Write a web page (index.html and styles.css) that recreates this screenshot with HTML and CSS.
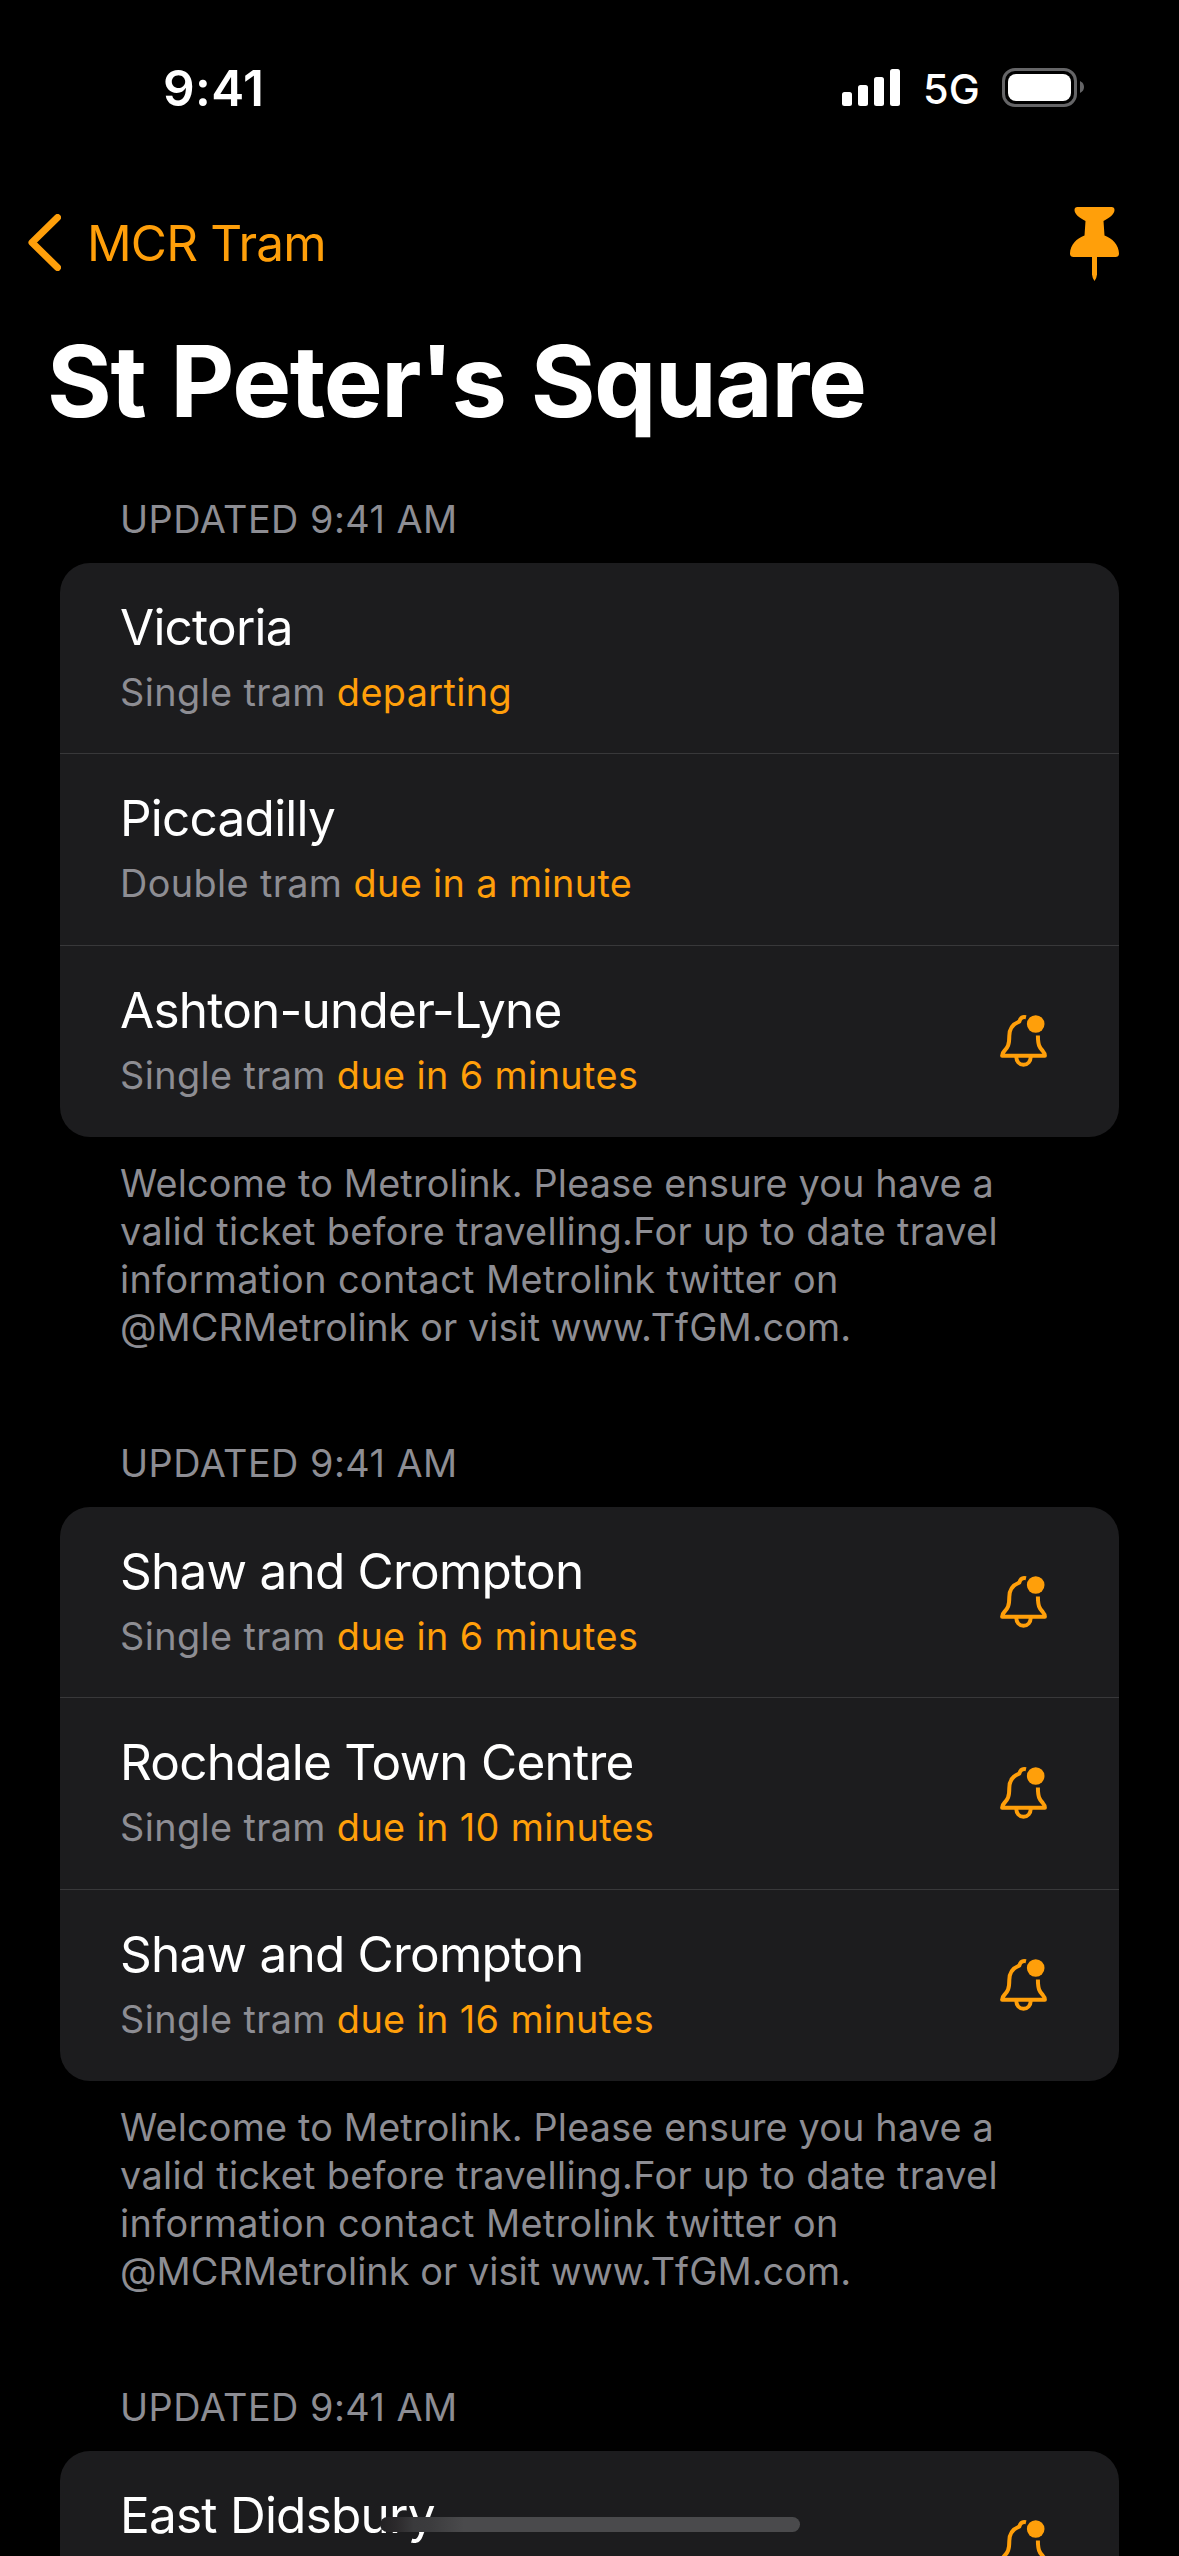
FILE: index.html
```html
<!DOCTYPE html>
<html lang="en">
<head>
<meta charset="utf-8">
<title>St Peter's Square</title>
<link rel="stylesheet" href="styles.css">
</head>
<body>
<svg class="defs" aria-hidden="true">
  <symbol id="bell" viewBox="0 0 47 52">
    <g fill="none" stroke="currentColor" stroke-width="4" stroke-linejoin="round">
      <path d="M26 2.300C22.500 1.500 20.300 3 19.300 6.600C12.800 9 9.300 13.500 9.300 21C9.300 30 7.700 32.500 4.300 36C2.700 37.600 2.100 39 2.100 40.700H44.900C44.900 39 44.300 37.600 42.800 36C39.300 32.500 38 30 37.900 20.500"/>
      <path d="M16.200 41.500C16.400 46.500 19.300 49.800 23.500 49.800S30.600 46.500 30.800 41.500"/>
    </g>
    <circle cx="35.700" cy="9" r="8.800" fill="currentColor"/>
  </symbol>
</svg>
<div class="screen">
  <header class="status">
    <span class="time">9:41</span>
    <div class="indicators">
      <svg class="signal" viewBox="0 0 58 37"><rect x="0" y="23" width="10" height="14" rx="2.500"/><rect x="16" y="16" width="10" height="21" rx="2.500"/><rect x="32" y="8" width="10" height="29" rx="2.500"/><rect x="48" y="0" width="10" height="37" rx="2.500"/></svg>
      <span class="network">5G</span>
      <svg class="battery" viewBox="0 0 82 39"><rect x="1.500" y="1.500" width="72" height="36" rx="11.500" fill="none" stroke="#656567" stroke-width="3"/><rect x="6" y="6" width="63" height="27" rx="8" fill="#fff"/><path d="M78 13C80.800 14.300 82 16.500 82 19S80.800 23.700 78 25Z" fill="#656567"/></svg>
    </div>
  </header>
  <nav class="nav">
    <a class="back"><svg class="chevron" viewBox="0 0 33 57"><path d="M29.500 3.500L4 28.500L29.500 53.500" fill="none" stroke="currentColor" stroke-width="7" stroke-linecap="round" stroke-linejoin="round"/></svg><span>MCR Tram</span></a>
    <svg class="pin" viewBox="0 0 49 74"><path d="M7.500 0H41.500Q44.500 0 44.500 3C44.500 7 39.500 11 33.500 14L34.500 28.500C42 31 49 38 49 46.500Q49 50 45.500 50H27V67.500Q26.500 72 24.500 74Q22.500 72 22 67.500V50H3.500Q0 50 0 46.500C0 38 7 31 14.500 28.500L15.500 14C9.500 11 4.500 7 4.500 3Q4.500 0 7.500 0Z" fill="currentColor"/></svg>
  </nav>
  <h1 class="title">St Peter's Square</h1>
  <main>
    <section class="stop">
      <h2 class="updated">UPDATED 9:41 AM</h2>
      <ul class="card">
        <li class="row"><div><p class="name">Victoria</p><p class="detail">Single tram <b>departing</b></p></div></li>
        <li class="row"><div><p class="name">Piccadilly</p><p class="detail">Double tram <b>due in a minute</b></p></div></li>
        <li class="row"><div><p class="name">Ashton-under-Lyne</p><p class="detail">Single tram <b>due in 6 minutes</b></p></div><svg class="bell"><use href="#bell"/></svg></li>
      </ul>
      <p class="note"><span>Welcome to Metrolink. Please ensure you have a </span><span>valid ticket before travelling.For up to date travel </span><span>information contact Metrolink twitter on </span><span>@MCRMetrolink or visit www.TfGM.com.</span></p>
    </section>
    <section class="stop">
      <h2 class="updated">UPDATED 9:41 AM</h2>
      <ul class="card">
        <li class="row"><div><p class="name">Shaw and Crompton</p><p class="detail">Single tram <b>due in 6 minutes</b></p></div><svg class="bell"><use href="#bell"/></svg></li>
        <li class="row"><div><p class="name">Rochdale Town Centre</p><p class="detail">Single tram <b>due in 10 minutes</b></p></div><svg class="bell"><use href="#bell"/></svg></li>
        <li class="row"><div><p class="name">Shaw and Crompton</p><p class="detail">Single tram <b>due in 16 minutes</b></p></div><svg class="bell"><use href="#bell"/></svg></li>
      </ul>
      <p class="note"><span>Welcome to Metrolink. Please ensure you have a </span><span>valid ticket before travelling.For up to date travel </span><span>information contact Metrolink twitter on </span><span>@MCRMetrolink or visit www.TfGM.com.</span></p>
    </section>
    <section class="stop">
      <h2 class="updated">UPDATED 9:41 AM</h2>
      <ul class="card">
        <li class="row"><div><p class="name">East Didsbury</p></div><svg class="bell"><use href="#bell"/></svg></li>
      </ul>
    </section>
  </main>
  <div class="home-indicator"></div>
</div>
</body>
</html>
```

FILE: styles.css
```css
* { box-sizing: border-box; margin: 0; padding: 0; }
body { background: #000; color: #fff; font-family: Inter, "Liberation Sans", sans-serif; }
.defs { position: absolute; width: 0; height: 0; }
.screen { position: relative; width: 1179px; height: 2556px; overflow: hidden; background: #000; }
.status { display: flex; justify-content: space-between; height: 177px; padding: 58px 95px 0 163px; }
.time { font-size: 49.5px; line-height: 60px; font-weight: 600; letter-spacing: 0.4px; }
.indicators { display: flex; align-items: flex-start; }
.signal { width: 58px; height: 37px; margin-top: 11px; fill: #fff; }
.network { width: 102px; padding-left: 23px; font-size: 41.5px; line-height: 60px; font-weight: 500; margin-top: 1px; }
.battery { width: 82px; height: 39px; margin-top: 10px; }
.nav { display: flex; justify-content: space-between; height: 132px; padding: 30px 60px 0 28px; color: #ff9f0a; }
.back { display: flex; align-items: flex-start; gap: 26px; font-size: 49.5px; line-height: 60px; letter-spacing: -0.85px; }
.back span { margin-top: 6px; }
.chevron { width: 33px; height: 57px; margin-top: 7px; }
.pin { width: 49px; height: 74px; }
.title { height: 159px; padding: 12px 0 0 47px; font-size: 99px; line-height: 120px; font-weight: 700; letter-spacing: -1.4px; word-spacing: 3px; white-space: nowrap; }
.stop { height: 944px; padding: 0 60px; }
.updated { height: 95px; padding: 27px 0 0 60px; font-size: 37.8px; line-height: 48px; font-weight: 400; letter-spacing: 0.48px; color: #8d8d93; white-space: nowrap; }
.card { list-style: none; border-radius: 30px; background: #1c1c1e; overflow: hidden; }
.row { display: flex; justify-content: space-between; height: 190px; padding: 34px 72px 0 60px; }
.row + .row { height: 192px; border-top: 1px solid #38383a; }
.name { font-size: 49.5px; line-height: 60px; letter-spacing: -0.77px; white-space: nowrap; }
.detail { margin-top: 11px; font-size: 37.8px; line-height: 48px; letter-spacing: 0.38px; color: #8d8d93; white-space: nowrap; }
.detail b { font-weight: 400; color: #ff9f0a; }
.bell { width: 47px; height: 52px; margin-top: 35px; color: #ff9f0a; flex: none; }
.note { padding: 22px 0 0 60px; font-size: 37.8px; line-height: 48px; color: #8d8d93; white-space: nowrap; }
.note span { display: block; letter-spacing: 0.18px; }
.note span:nth-child(2) { letter-spacing: 0.33px; }
.note span:nth-child(3) { letter-spacing: 0.38px; }
.note span:nth-child(4) { letter-spacing: 0.06px; }
.home-indicator { position: absolute; left: 380px; top: 2517px; width: 420px; height: 15px; border-radius: 8px; background: linear-gradient(90deg, #222123, #2c2a2c 4%, #3a3a3c 8%, #3c3c3e 12%, #4a4a4c 20%); }
```
